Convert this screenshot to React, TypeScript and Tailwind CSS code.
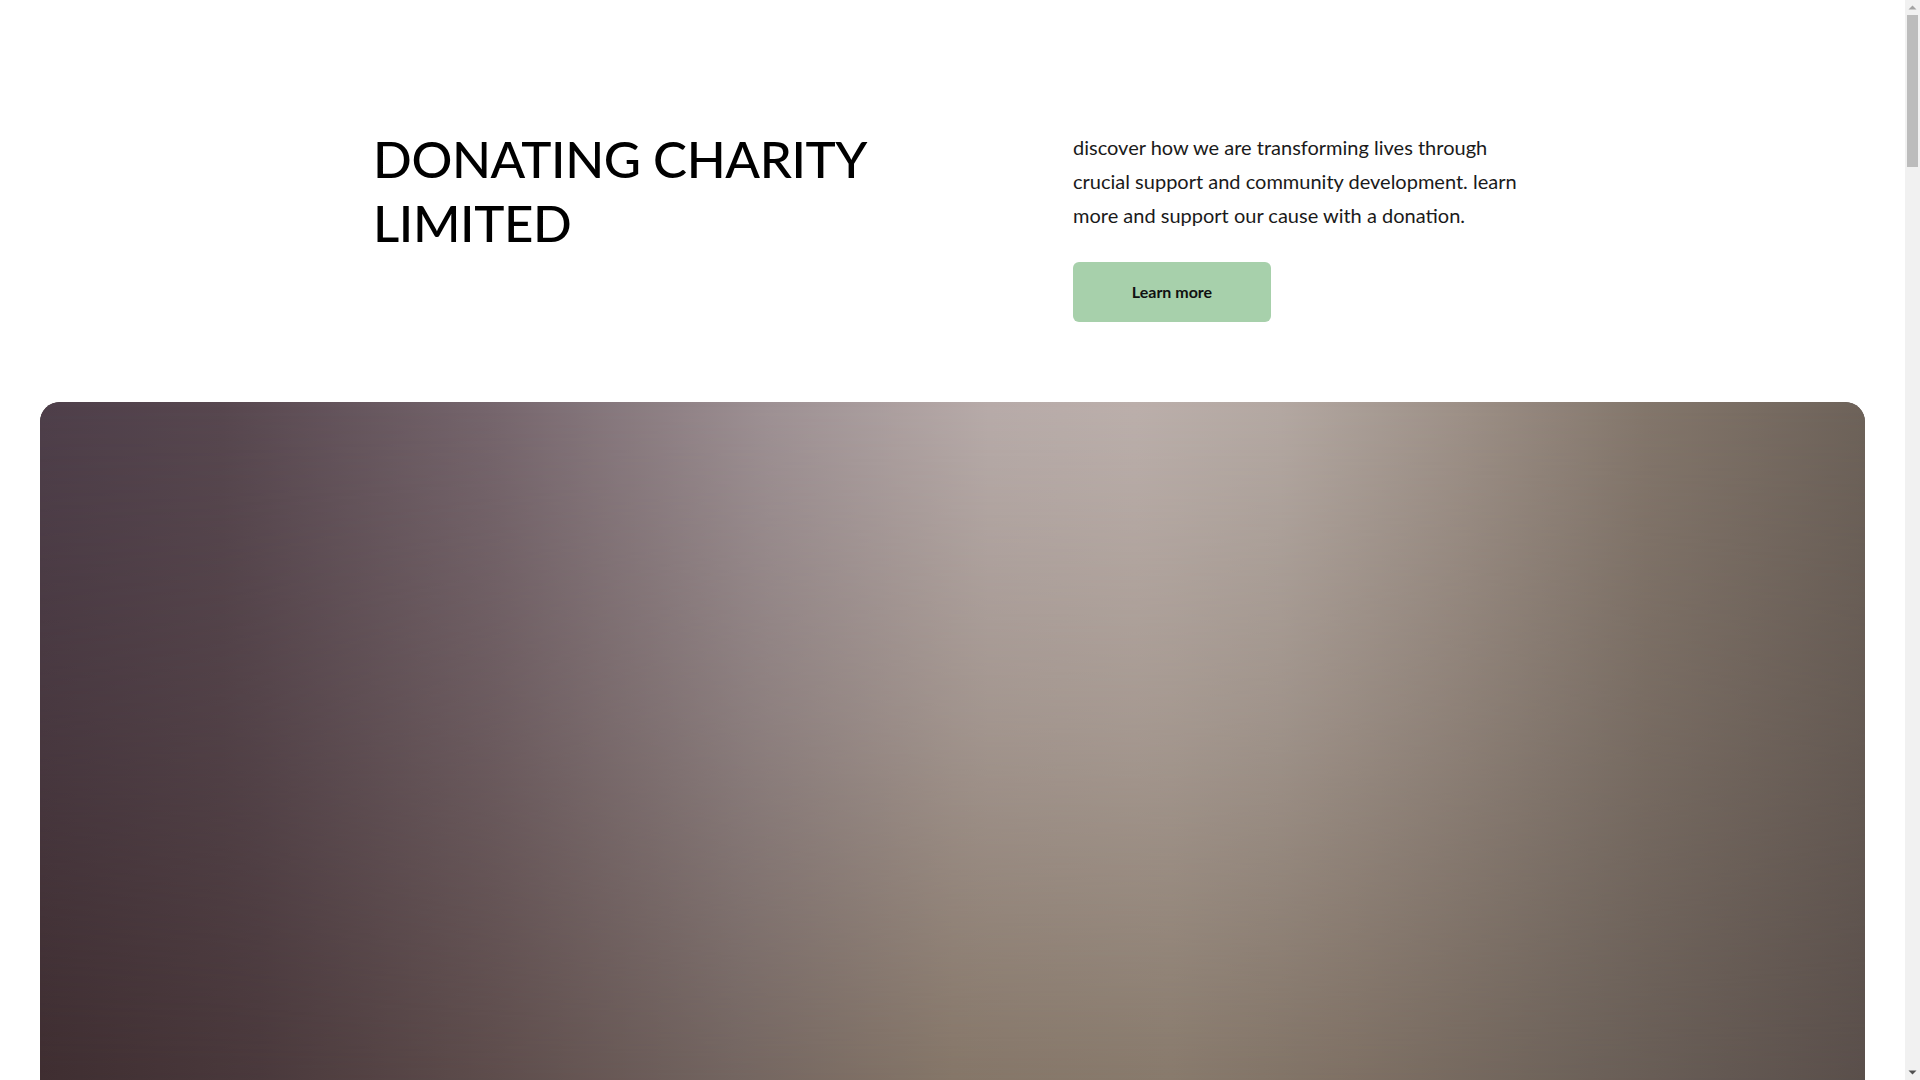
import React from "react";

function FakeScrollbar() {
  return (
    <div className="fixed right-0 top-0 flex h-[1080px] w-[15px] flex-col items-center bg-[#f1f1f1]">
      <div className="flex h-[15px] w-[15px] items-center justify-center">
        <svg width="9" height="5" viewBox="0 0 9 5">
          <path d="M0.5 4.5 L4.5 0.5 L8.5 4.5 Z" fill="#a3a3a3" />
        </svg>
      </div>
      <div className="h-[152px] w-[11px] bg-[#bcbcbc]" />
      <div className="flex-1" />
      <div className="flex h-[15px] w-[15px] items-center justify-center">
        <svg width="9" height="5" viewBox="0 0 9 5">
          <path d="M0.5 0.5 L4.5 4.5 L8.5 0.5 Z" fill="#505050" />
        </svg>
      </div>
    </div>
  );
}

export default function App() {
  return (
    <div className="min-h-[7460px] bg-white font-['Lato','Liberation_Sans',sans-serif] text-black">
      <div className="mr-[15px]">
        <section className="flex pl-[373px] pt-[127px]">
          <div className="w-[700px] shrink-0">
            <h1 className="text-[51px] leading-[64px] font-medium tracking-[-0.008em] uppercase">
              DONATING CHARITY
              <br />
              LIMITED
            </h1>
          </div>
          <div className="w-[455px] pt-[3px]">
            <p className="text-[20px] leading-[34px] font-normal text-[#1a1a1a]">
              discover how we are transforming lives through crucial support and community development. learn more and support our cause with a donation.
            </p>
            <button className="mt-[30px] flex h-[60px] w-[198px] items-center justify-center rounded-[6px] bg-[#a7d0ab] text-[16px] font-bold text-[#111]">
              Learn more
            </button>
          </div>
        </section>
        <div className="mx-[40px] mt-[80px]">
          <div className="relative h-[900px] overflow-hidden rounded-[20px] bg-[linear-gradient(to_right,#3f2e31_0%,#4a393c_12%,#5e4d4c_25%,#736560_38%,#857668_50%,#887a6c_62%,#7e7064_72%,#6c6159_85%,#5a4f4b_100%)]">
            <div className="absolute inset-0 bg-[linear-gradient(to_right,#4e3f4a_0%,#57474f_10%,#76666d_25%,#9e9194_40%,#b7aba9_52%,#bbafab_60%,#b3a8a2_68%,#9d9087_78%,#83766b_88%,#6d6259_100%)] [mask-image:linear-gradient(to_bottom,black_0%,rgba(0,0,0,0.6)_35%,transparent_76%)]" />
          </div>
        </div>
      </div>
      <FakeScrollbar />
    </div>
  );
}
